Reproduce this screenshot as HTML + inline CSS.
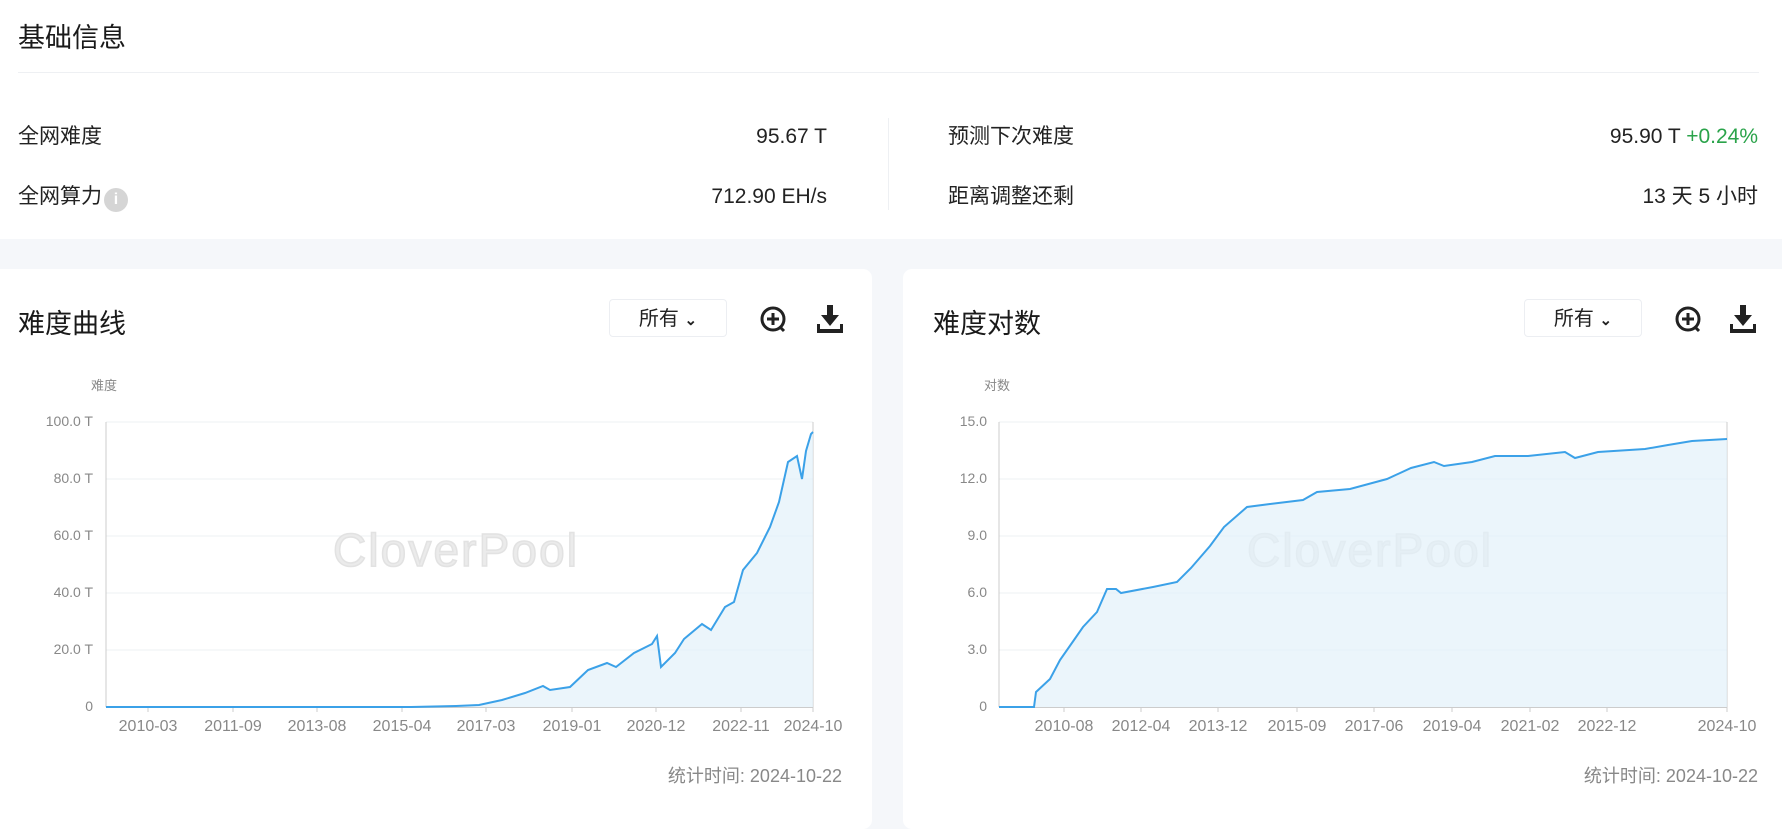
<!DOCTYPE html>
<html><head><meta charset="utf-8"><style>
body{margin:0;width:1782px;height:802px;background:#f5f7fa;font-family:"Liberation Sans","Noto Sans CJK SC",sans-serif;color:#222;position:relative;overflow:hidden}
.a{position:absolute;white-space:nowrap}
.top{position:absolute;left:0;top:0;width:1782px;height:239px;background:#fff}
.card{position:absolute;top:269px;height:560px;background:#fff;border-radius:9px}
.t{font-size:27px;color:#1a1a1a}
.r{font-size:21px;color:#222;line-height:26px}
.dd{position:absolute;top:299px;width:118px;height:38px;border:1px solid #eceef2;border-radius:4px;font-size:20px;line-height:38px;text-align:center;box-sizing:border-box}
.ax{font-size:14px;color:#888}
</style></head><body>
<div class="top"></div>
<div class="a t" style="left:18px;top:16px">基础信息</div>
<div class="a" style="left:18px;top:72px;width:1741px;height:1px;background:#eef0f3"></div>
<div class="a r" style="left:18px;top:124px">全网难度</div>
<div class="a r" style="right:955px;top:124px">95.67 T</div>
<div class="a r" style="left:18px;top:184px">全网算力<span style="display:inline-block;width:24px;height:24px;border-radius:50%;background:#d5d5d5;color:#fff;font-size:16px;line-height:24px;text-align:center;vertical-align:-1px;margin-left:2px;font-weight:bold">i</span></div>
<div class="a r" style="right:955px;top:184px">712.90 EH/s</div>
<div class="a" style="left:888px;top:118px;width:1px;height:92px;background:#eef0f3"></div>
<div class="a r" style="left:948px;top:124px">预测下次难度</div>
<div class="a r" style="right:24px;top:124px">95.90 T <span style="color:#2aa34a">+0.24%</span></div>
<div class="a r" style="left:948px;top:184px">距离调整还剩</div>
<div class="a r" style="right:24px;top:184px">13 天 5 小时</div>

<div class="card" style="left:-10px;width:882px"></div>
<div class="card" style="left:903px;width:889px"></div>

<div class="a t" style="left:18px;top:302px">难度曲线</div>
<div class="dd" style="left:609px">所有 <span style="font-size:15px;font-weight:bold">&#8964;</span></div>
<div class="a t" style="left:933px;top:302px">难度对数</div>
<div class="dd" style="left:1524px">所有 <span style="font-size:15px;font-weight:bold">&#8964;</span></div>

<div class="a ax" style="left:91px;top:375px;font-size:13px">难度</div>
<div class="a ax" style="left:984px;top:375px;font-size:13px">对数</div>

<div class="a ax" style="right:1689px;top:413px">100.0 T</div>
<div class="a ax" style="right:1689px;top:470px">80.0 T</div>
<div class="a ax" style="right:1689px;top:527px">60.0 T</div>
<div class="a ax" style="right:1689px;top:584px">40.0 T</div>
<div class="a ax" style="right:1689px;top:641px">20.0 T</div>
<div class="a ax" style="right:1689px;top:698px">0</div>

<div class="a ax" style="right:795px;top:413px">15.0</div>
<div class="a ax" style="right:795px;top:470px">12.0</div>
<div class="a ax" style="right:795px;top:527px">9.0</div>
<div class="a ax" style="right:795px;top:584px">6.0</div>
<div class="a ax" style="right:795px;top:641px">3.0</div>
<div class="a ax" style="right:795px;top:698px">0</div>

<svg class="a" style="left:0;top:0" width="1782" height="802">
<g font-family="Liberation Sans,sans-serif" font-size="16" fill="#888" text-anchor="middle">
<text x="148" y="731">2010-03</text><text x="233" y="731">2011-09</text><text x="317" y="731">2013-08</text><text x="402" y="731">2015-04</text><text x="486" y="731">2017-03</text><text x="572" y="731">2019-01</text><text x="656" y="731">2020-12</text><text x="741" y="731">2022-11</text><text x="813" y="731">2024-10</text>
<text x="1064" y="731">2010-08</text><text x="1141" y="731">2012-04</text><text x="1218" y="731">2013-12</text><text x="1297" y="731">2015-09</text><text x="1374" y="731">2017-06</text><text x="1452" y="731">2019-04</text><text x="1530" y="731">2021-02</text><text x="1607" y="731">2022-12</text><text x="1727" y="731">2024-10</text>
</g>
<g stroke="#eef0f3" stroke-width="1">
<path d="M106 422H813M106 479H813M106 536H813M106 593H813M106 650H813"/>
<path d="M999 422H1727M999 479H1727M999 536H1727M999 593H1727M999 650H1727"/>
</g>
<g stroke="#ccc" stroke-width="1">
<path d="M106 707.5H813M148 707v5M233 707v5M317 707v5M402 707v5M486 707v5M572 707v5M656 707v5M741 707v5M813 707v5M106 422V707M813 422V707"/>
<path d="M999 707.5H1727M1064 707v5M1141 707v5M1218 707v5M1297 707v5M1374 707v5M1452 707v5M1530 707v5M1607 707v5M1727 707v5M999 422V707M1727 422V707"/>
</g>
<text x="455" y="566" font-family="Liberation Sans,sans-serif" font-size="46" fill="#ebebeb" text-anchor="middle" stroke="#e2e2e2" stroke-width="1.5" textLength="244">CloverPool</text>
<text x="1369" y="566" font-family="Liberation Sans,sans-serif" font-size="46" fill="#ebebeb" text-anchor="middle" stroke="#e2e2e2" stroke-width="1.5" textLength="244">CloverPool</text>
<path d="M106 707L411 707L456 706L479 705L502 700L525 693L543 686L550 690L570 687L588 670L607 663L616 667L634 653L652 644L657 636L661 667L675 653L684 639L702 624L711 630L725 607L734 602L743 570L757 553L770 527L779 502L788 462L797 456L802 479L806 451L811 434L813 432V707Z" fill="#e3f1f9" opacity="0.7"/>
<path d="M106 707L411 707L456 706L479 705L502 700L525 693L543 686L550 690L570 687L588 670L607 663L616 667L634 653L652 644L657 636L661 667L675 653L684 639L702 624L711 630L725 607L734 602L743 570L757 553L770 527L779 502L788 462L797 456L802 479L806 451L811 434L813 432" fill="none" stroke="#3ba1e8" stroke-width="2"/>
<path d="M999 707L1034 707L1036 692L1050 679L1060 660L1074 640L1083 627L1097 612L1107 589L1116 589L1121 593L1153 587L1177 582L1191 568L1210 546L1224 527L1247 507L1270 504L1303 500L1317 492L1350 489L1387 479L1411 468L1434 462L1444 466L1472 462L1495 456L1528 456L1565 452L1575 458L1598 452L1645 449L1668 445L1692 441L1727 439V707Z" fill="#e3f1f9" opacity="0.7"/>
<path d="M999 707L1034 707L1036 692L1050 679L1060 660L1074 640L1083 627L1097 612L1107 589L1116 589L1121 593L1153 587L1177 582L1191 568L1210 546L1224 527L1247 507L1270 504L1303 500L1317 492L1350 489L1387 479L1411 468L1434 462L1444 466L1472 462L1495 456L1528 456L1565 452L1575 458L1598 452L1645 449L1668 445L1692 441L1727 439" fill="none" stroke="#3ba1e8" stroke-width="2"/>
<g fill="none" stroke="#222" stroke-width="3">
<circle cx="773" cy="319" r="11"/><path d="M773 313v12M767 319h12M780 327l4 4"/>
<circle cx="1688" cy="319" r="11"/><path d="M1688 313v12M1682 319h12M1695 327l4 4"/>
</g>
<g fill="#222">
<path d="M827 305h6v10h6l-9 11-9-11h6z"/><rect x="817" y="329" width="26" height="4"/><rect x="817" y="324" width="3" height="6"/><rect x="840" y="324" width="3" height="6"/>
<path d="M1740 305h6v10h6l-9 11-9-11h6z"/><rect x="1730" y="329" width="26" height="4"/><rect x="1730" y="324" width="3" height="6"/><rect x="1753" y="324" width="3" height="6"/>
</g>
</svg>
<div class="a" style="right:940px;top:762px;font-size:18px;color:#888">统计时间: 2024-10-22</div>
<div class="a" style="right:24px;top:762px;font-size:18px;color:#888">统计时间: 2024-10-22</div>
</body></html>
